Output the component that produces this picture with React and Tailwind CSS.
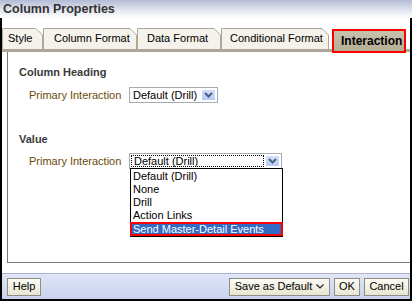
import React from "react";

const tabs = [
  { label: "Style", w: 41, cls: "w-[41px] pl-[6px]" },
  { label: "Column Format", w: 94, cls: "w-[94px] pl-[11px]" },
  { label: "Data Format", w: 84, cls: "w-[84px] pl-[10px]" },
  { label: "Conditional Format", w: 108, cls: "w-[108px] pl-[9px]" },
];

const options = ["Default (Drill)", "None", "Drill", "Action Links"];

const Tab = ({ label, w, cls }) => (
  <div className={`relative shrink-0 h-[21px] flex items-center text-[11px] text-black whitespace-nowrap ${cls}`}>
    <svg className="absolute inset-0" width={w} height={21} viewBox={`0 0 ${w} 21`}>
      <path
        d={`M0.5 21 V0.5 H${w - 7} L${w - 0.5} 7 V21`}
        fill="#f4f2ea"
        stroke="#aca899"
      />
    </svg>
    <span className="relative">{label}</span>
  </div>
);

const Chevron = () => (
  <svg width="9" height="6" viewBox="0 0 9 6">
    <path d="M1 1 L4.5 4.5 L8 1" fill="none" stroke="#4d6185" strokeWidth="2" />
  </svg>
);

const SelectBox = ({ width, focused, children }) => (
  <div className={`relative shrink-0 h-[16px] ${width} flex items-center bg-white border border-[#a5acb2] whitespace-nowrap`}>
    {focused ? (
      <div className="flex-1 h-[12px] ml-px mr-px flex items-center pl-[2px] border border-dotted border-black">
        Default (Drill)
      </div>
    ) : (
      <div className="flex-1 pl-[3px]">Default (Drill)</div>
    )}
    <div className="w-[15px] h-[12px] mr-px flex items-center justify-center bg-gradient-to-b from-[#d3def9] to-[#b9cbf5] border border-white">
      <Chevron />
    </div>
    {children}
  </div>
);

const Button = ({ cls, children }) => (
  <div
    className={`h-[18px] shrink-0 flex items-center justify-center text-[11px] text-black whitespace-nowrap border border-[#8e8e84] bg-gradient-to-b from-[#fdfcf5] to-[#e8e5d2] ${cls}`}
  >
    {children}
  </div>
);

export default function App() {
  return (
    <div className="w-[412px] h-[301px] bg-white overflow-hidden font-['Liberation_Sans',Arial,sans-serif]">
      <div className="h-[18px] pl-[3px] flex items-center text-[12.5px] font-bold text-[#333333] bg-gradient-to-b from-[#b3bbd4] via-[#dde1ec] to-white">
        Column Properties
      </div>

      <div className="h-[283px] border-l-2 border-r-2 border-b-2 border-black flex flex-col">
        <div className="mt-[10px] h-[24px] flex items-start border-b-[3px] border-[#aca899]">
          {tabs.map((t) => (
            <Tab key={t.label} {...t} />
          ))}
          <div className="relative z-10 shrink-0 ml-[3px] mt-px w-[74px] h-[24px] flex items-center pl-[7px] text-[12px] font-bold text-black bg-gradient-to-b from-[#c9c2ae] to-[#b5ad96] border-2 border-[#ff0000]">
            Interaction
          </div>
        </div>

        <div className="ml-[5px] h-[211px] border-l border-b border-[#7a7a7a] pt-[13px] pl-[11px] text-[11px]">
          <div className="h-[14px] leading-[14px] font-bold text-[#3a3a3a]">Column Heading</div>
          <div className="mt-[8px] h-[16px] flex items-center">
            <div className="w-[110px] shrink-0 pl-[10px] whitespace-nowrap text-[#6a4b06]">Primary Interaction</div>
            <SelectBox width="w-[89px]" />
          </div>

          <div className="mt-[29px] h-[14px] leading-[14px] font-bold text-[#3a3a3a]">Value</div>
          <div className="mt-[7px] h-[16px] flex items-center">
            <div className="w-[110px] shrink-0 pl-[10px] whitespace-nowrap text-[#6a4b06]">Primary Interaction</div>
            <SelectBox width="w-[153px]" focused>
              <div className="absolute top-full left-0 w-[153px] z-20 bg-white border border-black pt-px">
                {options.map((o) => (
                  <div key={o} className="h-[13px] leading-[13px] pl-[2px] text-black">
                    {o}
                  </div>
                ))}
                <div className="-mx-px h-[14px] flex items-center pl-[1px] bg-[#316ac5] text-white border-2 border-[#ff0000]">
                  Send Master-Detail Events
                </div>
              </div>
            </SelectBox>
          </div>
        </div>

        <div className="mt-[10px] h-[26px] border-t border-[#aab3cb] bg-gradient-to-b from-[#e1e6f8] to-[#c9d1ee] flex items-center pl-[5px] pr-[1px]">
          <Button cls="w-[34px]">Help</Button>
          <div className="flex-1" />
          <Button cls="w-[101px] gap-[4px]">
            <span>Save as Default</span>
            <svg width="8" height="5" viewBox="0 0 8 5">
              <path d="M0.5 0.5 L4 4 L7.5 0.5" fill="none" stroke="#222" strokeWidth="1.2" />
            </svg>
          </Button>
          <Button cls="ml-[4px] w-[26px]">OK</Button>
          <Button cls="ml-[4px] w-[45px]">Cancel</Button>
        </div>
      </div>
    </div>
  );
}
